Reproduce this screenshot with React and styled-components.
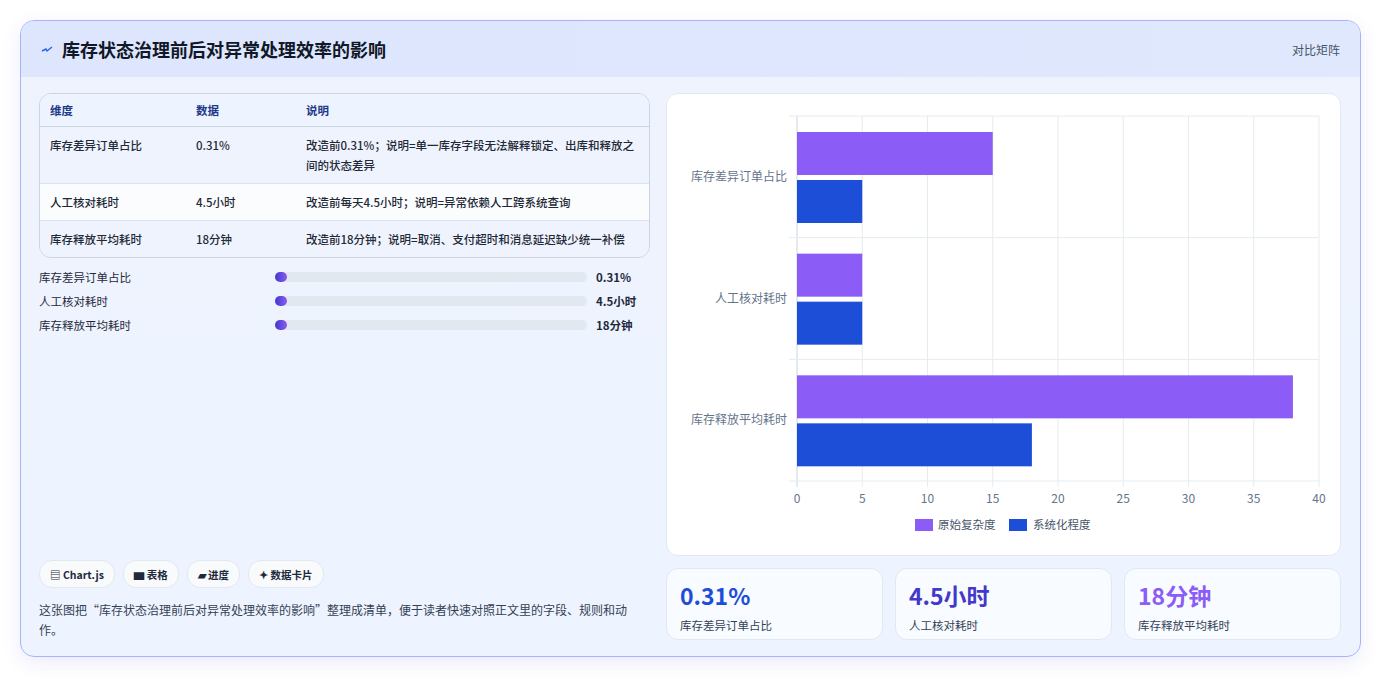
import React from 'react';
import styled, { createGlobalStyle } from 'styled-components';

const Global = createGlobalStyle`
  body { margin: 0; background: #fff; font-family: "Noto Sans CJK SC", "Noto Sans", sans-serif; color: #1e293b; }
`;

const Page = styled.div`
  padding: 20px 20px 22px 20px;
`;

const Card = styled.div`
  height: 637px;
  box-sizing: border-box;
  border: 1px solid #a5b4fc;
  border-radius: 14px;
  background: linear-gradient(180deg, #eef3fe 0%, #eef4ff 100%);
  box-shadow: 0 6px 18px rgba(99, 102, 241, 0.12);
  overflow: hidden;
  display: flex;
  flex-direction: column;
`;

const Header = styled.div`
  height: 56px;
  flex-shrink: 0;
  background: linear-gradient(90deg, #dde6fd, #dfe8fd);
  display: flex;
  align-items: center;
  justify-content: space-between;
  padding: 0 20px;
  h1 { margin: 0; font-size: 18px; font-weight: 700; color: #111827; display: flex; align-items: center; gap: 9px; }
  span { font-size: 12px; color: #475569; }
`;

const Body = styled.div`
  flex: 1;
  display: grid;
  grid-template-columns: 611px 675px;
  gap: 16px;
  padding: 16px 18px 20px 18px;
  min-height: 0;
`;

const Left = styled.div`
  display: flex;
  flex-direction: column;
`;

const Table = styled.table`
  width: 100%;
  border-collapse: separate;
  border-spacing: 0;
  border: 1px solid #cbd5e1;
  border-radius: 12px;
  overflow: hidden;
  font-size: 11.5px;
  th { text-align: left; font-weight: 700; color: #1e3a8a; height: 32px; padding: 0 10px; border-bottom: 1px solid #cbd5e1; background: #eef4ff; }
  td { padding: 8px 10px; vertical-align: top; line-height: 20px; color: #1f2937; font-weight: 500; }
  tr:nth-child(even) td { background: #fbfcfe; }
  tr:nth-child(odd) td { background: #eef3fd; }
  tr + tr td { border-top: 1px solid #dbe3ef; }
`;

const Bars = styled.div`
  display: flex;
  flex-direction: column;
  gap: 6px;
  margin-top: 10px;
`;

const BarRow = styled.div`
  display: grid;
  grid-template-columns: 227px 312px auto;
  gap: 9px;
  align-items: center;
  font-size: 11.5px;
  height: 18px;
  b { font-weight: 700; }
`;

const Track = styled.div`
  height: 10px;
  border-radius: 5px;
  background: #e2e8f0;
`;

const Fill = styled.div`
  height: 100%;
  border-radius: 5px;
  background: linear-gradient(90deg, #4338ca, #8b5cf6);
`;

const Spacer = styled.div` flex: 1; `;

const Chips = styled.div`
  display: flex;
  gap: 8px;
`;

const Chip = styled.div`
  height: 26px;
  padding: 0 10px;
  border-radius: 13px;
  background: #f8fafc;
  border: 1px solid #e2e8f0;
  font-size: 10.5px;
  font-weight: 700;
  display: flex;
  align-items: center;
  gap: 3px;
`;

const Note = styled.p`
  margin: 12px 0 0;
  font-size: 12px;
  line-height: 20px;
  color: #334155;
`;

const Right = styled.div`
  display: flex;
  flex-direction: column;
  gap: 12px;
`;

const ChartCard = styled.div`
  height: 461px;
  background: #fff;
  border: 1px solid #e2e8f0;
  border-radius: 12px;
`;

const Stats = styled.div`
  display: grid;
  grid-template-columns: repeat(3, 1fr);
  gap: 12px;
`;

const Stat = styled.div`
  height: 72px;
  box-sizing: border-box;
  background: #f8fbff;
  border: 1px solid #e2e8f0;
  border-radius: 12px;
  padding: 10px 13px;
  strong { display: block; font-size: 23px; line-height: 32px; font-weight: 700; color: ${p => p.color}; }
  span { font-size: 11.5px; color: #334155; }
`;

const rows = [
  ['库存差异订单占比', '0.31%', '改造前0.31%；说明=单一库存字段无法解释锁定、出库和释放之间的状态差异', 2],
  ['人工核对耗时', '4.5小时', '改造前每天4.5小时；说明=异常依赖人工跨系统查询', 2],
  ['库存释放平均耗时', '18分钟', '改造前18分钟；说明=取消、支付超时和消息延迟缺少统一补偿', 9],
];

const data = [[15, 5], [5, 5], [38, 18]];

function Chart() {
  const L = 130, R = 652, T = 22, B = 387;
  const sx = v => L + (v / 40) * (R - L);
  const band = (B - T) / 3;
  return (
    <svg width="675" height="461" fontFamily="Noto Sans CJK SC, sans-serif">
      {[0, 5, 10, 15, 20, 25, 30, 35, 40].map(v => (
        <g key={v}>
          <line x1={sx(v)} x2={sx(v)} y1={T} y2={B + 6} stroke={v === 0 ? '#cbd5e1' : '#e5ecef'} />
          <text x={sx(v)} y={B + 22} fontSize="12" fill="#64748b" textAnchor="middle">{v}</text>
        </g>
      ))}
      {[0, 1, 2, 3].map(i => (
        <line key={i} x1={L - 8} x2={R} y1={T + band * i} y2={T + band * i} stroke="#e5ecef" />
      ))}
      {data.map(([a, b], i) => {
        const y0 = T + band * i;
        return (
          <g key={i}>
            <rect x={L} y={y0 + 16} width={sx(a) - L} height={43} fill="#8b5cf6" />
            <rect x={L} y={y0 + 64} width={sx(b) - L} height={43} fill="#1d4ed8" />
            <text x={L - 10} y={y0 + band / 2 + 4} fontSize="12" fill="#64748b" textAnchor="end">{rows[i][0]}</text>
          </g>
        );
      })}
      <rect x="248" y="425" width="18" height="12" fill="#8b5cf6" />
      <text x="271" y="435" fontSize="11.5" fill="#475569">原始复杂度</text>
      <rect x="342" y="425" width="18" height="12" fill="#1d4ed8" />
      <text x="366" y="435" fontSize="11.5" fill="#475569">系统化程度</text>
    </svg>
  );
}

export default function App() {
  return (
    <Page>
      <Global />
      <Card>
        <Header>
          <h1>
            <svg width="12" height="10" viewBox="0 0 12 10"><path d="M1 7 L5 5 L6 7 L11 3" stroke="#2563eb" strokeWidth="1.4" fill="none" /></svg>
            库存状态治理前后对异常处理效率的影响
          </h1>
          <span>对比矩阵</span>
        </Header>
        <Body>
          <Left>
            <Table>
              <thead>
                <tr><th style={{ width: 126 }}>维度</th><th style={{ width: 90 }}>数据</th><th>说明</th></tr>
              </thead>
              <tbody>
                {rows.map(r => (
                  <tr key={r[0]}><td>{r[0]}</td><td>{r[1]}</td><td>{r[2]}</td></tr>
                ))}
              </tbody>
            </Table>
            <Bars>
              {rows.map(r => (
                <BarRow key={r[0]}>
                  <span>{r[0]}</span>
                  <Track><Fill style={{ width: `${(r[3] / 312) * 100 * 1.3}%`, minWidth: 12 }} /></Track>
                  <b>{r[1]}</b>
                </BarRow>
              ))}
            </Bars>
            <Spacer />
            <Chips>
              <Chip>▤ Chart.js</Chip>
              <Chip>▆ 表格</Chip>
              <Chip>▰ 进度</Chip>
              <Chip>✦ 数据卡片</Chip>
            </Chips>
            <Note>这张图把“库存状态治理前后对异常处理效率的影响”整理成清单，便于读者快速对照正文里的字段、规则和动作。</Note>
          </Left>
          <Right>
            <ChartCard><Chart /></ChartCard>
            <Stats>
              <Stat color="#1d4ed8"><strong>0.31%</strong><span>库存差异订单占比</span></Stat>
              <Stat color="#4338ca"><strong>4.5小时</strong><span>人工核对耗时</span></Stat>
              <Stat color="#8b5cf6"><strong>18分钟</strong><span>库存释放平均耗时</span></Stat>
            </Stats>
          </Right>
        </Body>
      </Card>
    </Page>
  );
}
